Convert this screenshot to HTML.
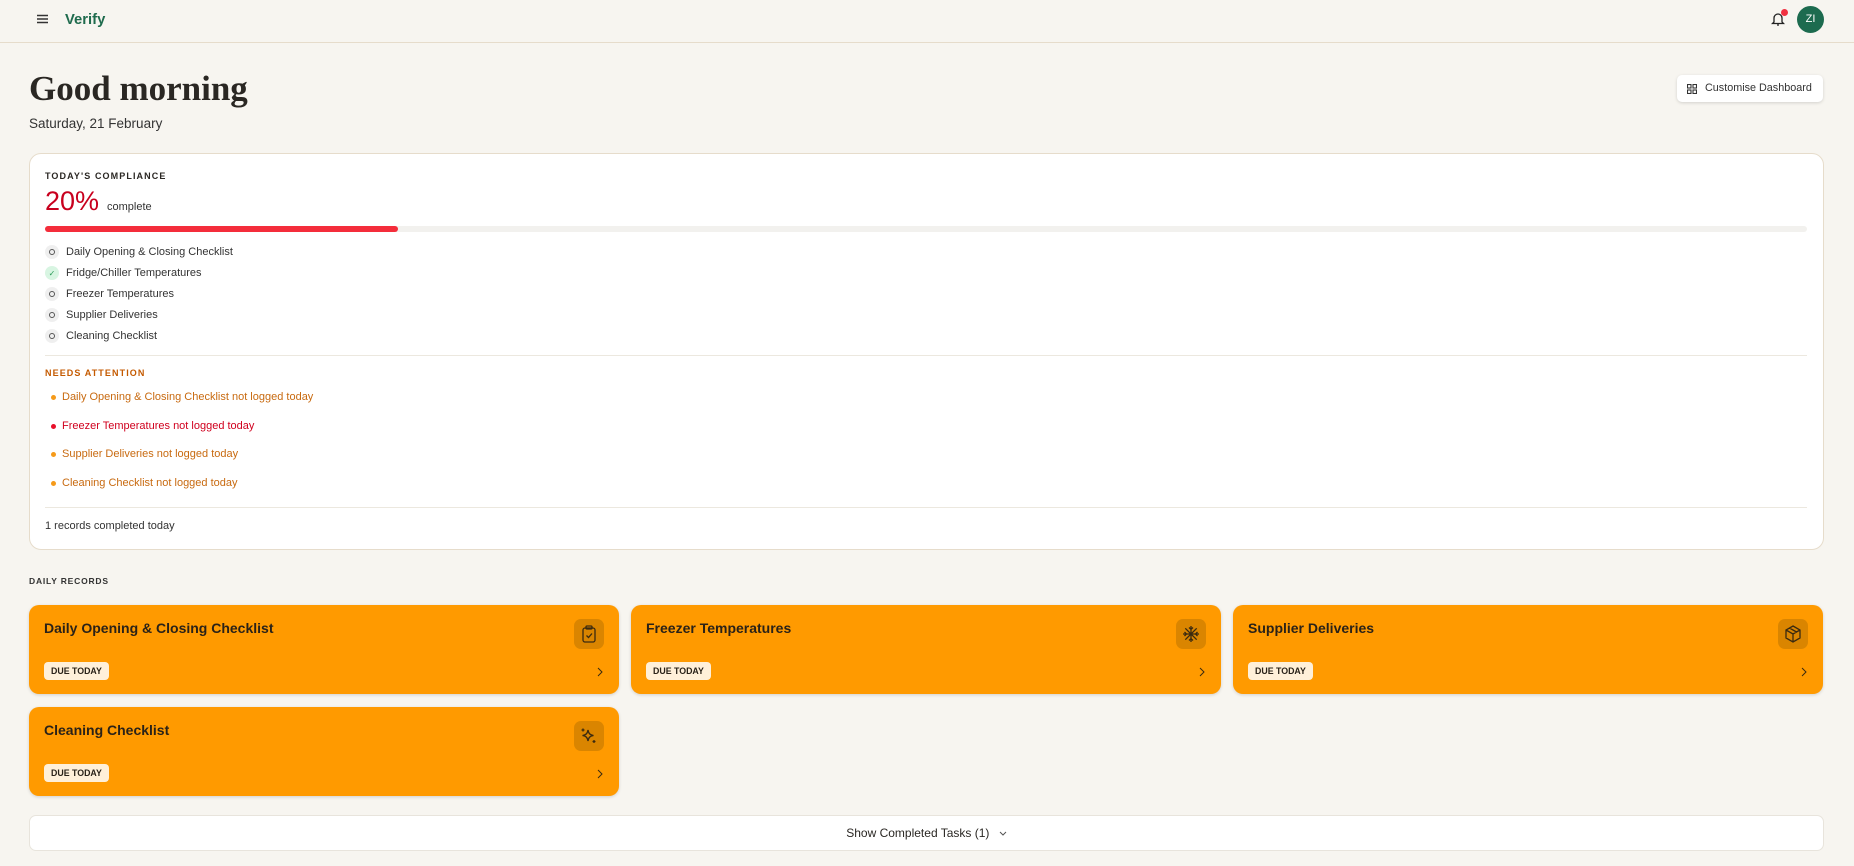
<!DOCTYPE html>
<html><head><meta charset="utf-8"><style>
*{box-sizing:border-box;margin:0;padding:0}
body{width:1854px;height:866px;background:#f7f5f0;font-family:"Liberation Sans",sans-serif;color:#2a2723;position:relative;overflow:hidden}
.hdr{position:absolute;left:0;top:0;width:1854px;height:43px;border-bottom:1px solid #e6dccb}
.abs{position:absolute}
.card{position:absolute;left:29px;top:153px;width:1795px;height:397px;background:#fff;border:1px solid #e6dccb;border-radius:12px}
.cap{font-size:9px;letter-spacing:1.1px;font-weight:bold}
.li{position:absolute;left:15px;font-size:11px;color:#333;display:flex;align-items:center}
.dot{width:14px;height:14px;border-radius:50%;background:#efefef;margin-right:7px;display:flex;align-items:center;justify-content:center}
.dot i{width:6px;height:6px;border:1.3px solid #555;border-radius:50%}
.att{position:absolute;left:21px;font-size:11px;display:flex;align-items:center}
.att b{width:5px;height:5px;border-radius:50%;margin-right:6px}
.rec{position:absolute;width:590px;height:89px;background:#ff9a00;border-radius:10px;box-shadow:0 1px 3px rgba(0,0,0,.15)}
.rec h3{position:absolute;left:15px;top:15px;font-size:14px;font-weight:600;color:#2a2218}
.rec .badge{position:absolute;left:15px;top:57px;height:18px;padding:0 7px;background:#fff0d9;border-radius:4px;font-size:8.8px;font-weight:bold;line-height:18px;color:#2a2218}
.rec .ic{position:absolute;right:15px;top:14px;width:30px;height:30px;border-radius:7px;background:#da8500;display:flex;align-items:center;justify-content:center}
.rec .ch{position:absolute;right:16px;top:62px}
</style></head><body>
<div class="hdr">
 <svg class="abs" style="left:37px;top:14px" width="11" height="10" viewBox="0 0 11 10"><path d="M0 1.5H11M0 5H11M0 8.5H11" stroke="#333" stroke-width="1.5"/></svg>
 <div class="abs" style="left:65px;top:12px;font-size:14.8px;font-weight:bold;color:#1f6b4d">Verify</div>
 <svg class="abs" style="left:1771px;top:11px" width="14" height="16" viewBox="0 0 14 16"><path d="M3 11V7a4 4 0 018 0v4l1.5 1.5h-11z M6 14h2" fill="none" stroke="#222" stroke-width="1.3"/></svg>
 <div class="abs" style="left:1781px;top:9px;width:7px;height:7px;border-radius:50%;background:#f03040"></div>
 <div class="abs" style="left:1797px;top:6px;width:27px;height:27px;border-radius:50%;background:#1d6b4f;color:#fff;font-size:11px;line-height:27px;text-align:center">ZI</div>
</div>
<div class="abs" style="left:29px;top:69px;font-family:'Liberation Serif',serif;font-weight:bold;font-size:35px;color:#2a2723">Good morning</div>
<div class="abs" style="left:29px;top:116px;font-size:13.5px;color:#333">Saturday, 21 February</div>
<div class="abs" style="left:1677px;top:75px;width:146px;height:27px;background:#fff;border-radius:5px;box-shadow:0 1px 3px rgba(0,0,0,.15);font-size:10.8px;line-height:27px;padding-left:28px;color:#333;white-space:nowrap">
 <svg class="abs" style="left:10px;top:9px" width="10" height="10" viewBox="0 0 10 10"><g fill="none" stroke="#333" stroke-width="1.1"><rect x=".5" y=".5" width="3.5" height="3.5"/><rect x="6" y=".5" width="3.5" height="3.5"/><rect x=".5" y="6" width="3.5" height="3.5"/><rect x="6" y="6" width="3.5" height="3.5"/></g></svg>Customise Dashboard</div>
<div class="card">
 <div class="abs cap" style="left:15px;top:17px">TODAY'S COMPLIANCE</div>
 <div class="abs" style="left:15px;top:32px;font-size:27px;color:#c8001e">20%</div>
 <div class="abs" style="left:77px;top:47px;font-size:11px;color:#333">complete</div>
 <div class="abs" style="left:15px;top:72px;width:1762px;height:6px;border-radius:3px;background:#f2f1ee"><div style="width:353px;height:6px;border-radius:3px;background:#f42d3b"></div></div>
 <div class="li" style="top:91px"><span class="dot"><i></i></span>Daily Opening &amp; Closing Checklist</div>
 <div class="li" style="top:112px"><span class="dot" style="background:#d8f5e2;color:#2a9a57;font-size:8px">✓</span>Fridge/Chiller Temperatures</div>
 <div class="li" style="top:133px"><span class="dot"><i></i></span>Freezer Temperatures</div>
 <div class="li" style="top:154px"><span class="dot"><i></i></span>Supplier Deliveries</div>
 <div class="li" style="top:175px"><span class="dot"><i></i></span>Cleaning Checklist</div>
 <div class="abs" style="left:15px;top:201px;width:1762px;height:1px;background:#ece8df"></div>
 <div class="abs cap" style="left:15px;top:214px;color:#c45a00">NEEDS ATTENTION</div>
 <div class="att" style="top:237px;color:#c86a10"><b style="background:#f59a1a"></b>Daily Opening &amp; Closing Checklist not logged today</div>
 <div class="att" style="top:266px;color:#d0001e"><b style="background:#e8102a"></b>Freezer Temperatures not logged today</div>
 <div class="att" style="top:294px;color:#c86a10"><b style="background:#f59a1a"></b>Supplier Deliveries not logged today</div>
 <div class="att" style="top:323px;color:#c86a10"><b style="background:#f59a1a"></b>Cleaning Checklist not logged today</div>
 <div class="abs" style="left:15px;top:353px;width:1762px;height:1px;background:#ece8df"></div>
 <div class="abs" style="left:15px;top:366px;font-size:11px;color:#333">1 records completed today</div>
</div>
<div class="abs cap" style="left:29px;top:576px;font-size:8.5px;letter-spacing:0.8px;color:#333">DAILY RECORDS</div>

<div class="rec" style="left:29px;top:605px"><h3>Daily Opening &amp; Closing Checklist</h3><div class="ic"><svg width="16" height="18" viewBox="0 0 16 18" fill="none" stroke="#3a2a10" stroke-width="1.3"><rect x="2" y="3" width="12" height="14" rx="2"/><rect x="5" y="1" width="6" height="3" rx="1"/><path d="M5.5 10.5l2 2 3.5-4"/></svg></div><div class="badge">DUE TODAY</div><svg class="ch" width="6" height="10" viewBox="0 0 6 10"><path d="M1 1l4 4-4 4" fill="none" stroke="#3a2a10" stroke-width="1"/></svg></div>

<div class="rec" style="left:631px;top:605px"><h3>Freezer Temperatures</h3><div class="ic"><svg width="18" height="18" viewBox="0 0 18 18" fill="none" stroke="#3a2a10" stroke-width="1.3"><path d="M9 1v16M1 9h16M3.3 3.3l11.4 11.4M14.7 3.3L3.3 14.7M7 2.5l2 2 2-2M7 15.5l2-2 2 2M2.5 7l2 2-2 2M15.5 7l-2 2 2 2"/></svg></div><div class="badge">DUE TODAY</div><svg class="ch" width="6" height="10" viewBox="0 0 6 10"><path d="M1 1l4 4-4 4" fill="none" stroke="#3a2a10" stroke-width="1"/></svg></div>

<div class="rec" style="left:1233px;top:605px"><h3>Supplier Deliveries</h3><div class="ic"><svg width="16" height="18" viewBox="0 0 16 18" fill="none" stroke="#3a2a10" stroke-width="1.3"><path d="M8 1l7 4v8l-7 4-7-4V5zM1 5l7 4 7-4M8 9v8M4.5 3l7 4"/></svg></div><div class="badge">DUE TODAY</div><svg class="ch" width="6" height="10" viewBox="0 0 6 10"><path d="M1 1l4 4-4 4" fill="none" stroke="#3a2a10" stroke-width="1"/></svg></div>

<div class="rec" style="left:29px;top:707px"><h3>Cleaning Checklist</h3><div class="ic"><svg width="18" height="18" viewBox="0 0 18 18" fill="none" stroke="#3a2a10" stroke-width="1.3"><path d="M8 3c.6 3.5 2 5 5.5 5.5C10 9 8.6 10.5 8 14c-.6-3.5-2-5-5.5-5.5C6 8 7.4 6.5 8 3z"/><path d="M3 1.5v3M1.5 3h3M14 13v3M12.5 14.5h3"/></svg></div><div class="badge">DUE TODAY</div><svg class="ch" width="6" height="10" viewBox="0 0 6 10"><path d="M1 1l4 4-4 4" fill="none" stroke="#3a2a10" stroke-width="1"/></svg></div>

<div class="abs" style="left:29px;top:815px;width:1795px;height:36px;background:#fff;border:1px solid #e8e4dc;border-radius:7px;text-align:center;font-size:12px;line-height:34px;color:#2a2723">Show Completed Tasks (1) <svg style="margin-left:6px;vertical-align:middle" width="8" height="5" viewBox="0 0 8 5"><path d="M1 1l3 3 3-3" fill="none" stroke="#555" stroke-width="1"/></svg></div>
</body></html>
